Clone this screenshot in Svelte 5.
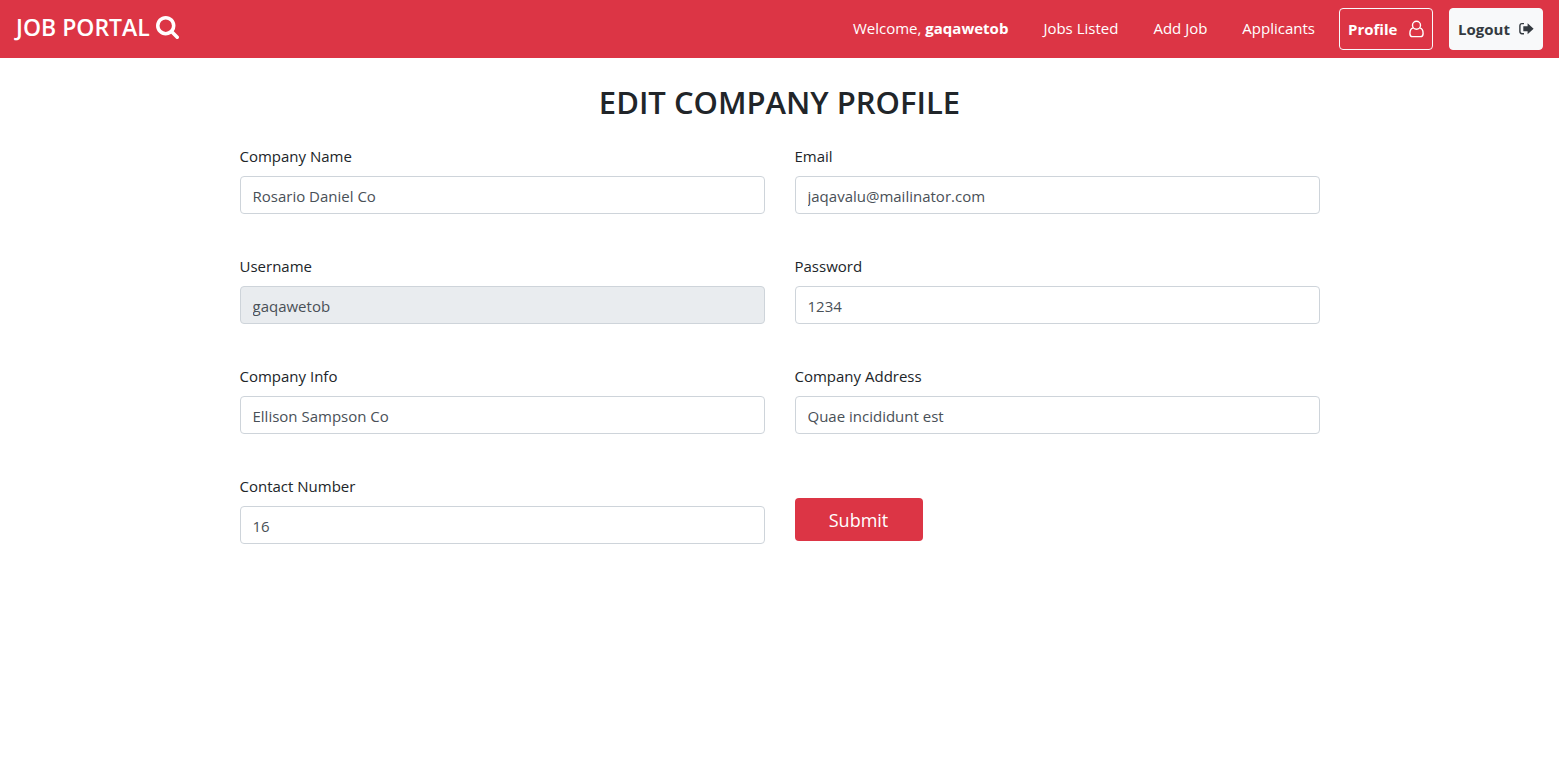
<script>
  const fields = [
    { id: 'company-name', label: 'Company Name', value: 'Rosario Daniel Co' },
    { id: 'email', label: 'Email', value: 'jaqavalu@mailinator.com' },
    { id: 'username', label: 'Username', value: 'gaqawetob', disabled: true },
    { id: 'password', label: 'Password', value: '1234' },
    { id: 'company-info', label: 'Company Info', value: 'Ellison Sampson Co' },
    { id: 'company-address', label: 'Company Address', value: 'Quae incididunt est' },
    { id: 'contact-number', label: 'Contact Number', value: '16' }
  ];
</script>

<header class="navbar">
  <a class="brand" href="#home">
    JOB PORTAL
    <svg class="search" viewBox="64 128 1664 1664" aria-hidden="true">
      <path d="M1216 832q0-185-131.5-316.5t-316.5-131.5-316.5 131.5-131.5 316.5 131.5 316.5 316.5 131.5 316.5-131.5 131.5-316.5zm512 832q0 52-38 90t-90 38q-54 0-90-38l-343-342q-179 124-399 124-143 0-273.5-55.5t-225-150-150-225-55.5-273.5 55.5-273.5 150-225 225-150 273.5-55.5 273.5 55.5 225 150 150 225 55.5 273.5q0 220-124 399l343 343q37 37 37 90z" />
    </svg>
  </a>
  <nav>
    <div class="links">
      <a href="#welcome">Welcome, <b>gaqawetob</b></a>
      <a href="#jobs">Jobs Listed</a>
      <a href="#add">Add Job</a>
      <a href="#applicants">Applicants</a>
    </div>
    <a class="btn profile" href="#profile">
      Profile
      <svg width="15" height="18" viewBox="0 0 15 18" aria-hidden="true">
        <g fill="none" stroke="currentColor" stroke-width="1.4">
          <circle cx="7.500" cy="5.200" r="4" />
          <path d="M4.200 7.900C2 8.500.9 10.500.9 13.400c0 2 1 3.200 2.700 3.200h7.800c1.700 0 2.700-1.200 2.700-3.200 0-2.900-1.100-4.900-3.300-5.500" />
        </g>
      </svg>
    </a>
    <a class="btn logout" href="#logout">
      Logout
      <svg width="15" height="14" viewBox="0 0 15 14" aria-hidden="true">
        <path d="M5 1.600H3Q.9 1.600.9 3.700v5.900q0 2.100 2.100 2.100H5" fill="none" stroke="currentColor" stroke-width="1.400" />
        <path d="M4.300 4.200H8.600V1.200L14.600 6.700 8.600 12.200V9.200H4.300Z" fill="currentColor" />
      </svg>
    </a>
  </nav>
</header>

<main>
  <h1>EDIT COMPANY PROFILE</h1>
  <form onsubmit={(e) => e.preventDefault()}>
    {#each fields as field}
      <div class="field">
        <label for={field.id}>{field.label}</label>
        <input id={field.id} type="text" value={field.value} disabled={field.disabled} />
      </div>
    {/each}
    <div class="action">
      <button type="submit">Submit</button>
    </div>
  </form>
</main>

<style>
  :global(body) {
    margin: 0;
    background: #fff;
    color: #212529;
    font: 15px/24px 'Segoe UI', 'Open Sans', 'Noto Sans', sans-serif;
  }

  .navbar {
    display: flex;
    justify-content: space-between;
    align-items: center;
    padding: 8px 16px;
    background: #dc3545;
  }

  a {
    color: #fff;
    text-decoration: none;
    white-space: nowrap;
  }

  .brand {
    display: flex;
    align-items: center;
    gap: 6px;
    padding-bottom: 4px;
    font-size: 23px;
    line-height: 28px;
    font-weight: 600;
  }

  .search {
    width: 23px;
    height: 23px;
    fill: #fff;
  }

  nav {
    display: flex;
    align-items: center;
    gap: 16px;
  }

  .links {
    display: flex;
    gap: 35px;
    padding: 0 8px 2px;
  }

  .btn {
    box-sizing: border-box;
    display: flex;
    align-items: center;
    justify-content: space-between;
    width: 94px;
    height: 42px;
    padding: 0 8px;
    border: 1px solid #f8f9fa;
    border-radius: 4px;
    font-weight: 700;
  }

  .logout {
    background: #f8f9fa;
    color: #343a40;
  }

  h1 {
    margin: 0 0 22px;
    font-size: 31px;
    line-height: 40px;
    font-weight: 600;
    text-align: center;
  }

  main {
    padding: 24px 15px;
  }

  form {
    display: grid;
    grid-template-columns: 1fr 1fr;
    gap: 40px 30px;
    max-width: 1080px;
    margin: 0 auto;
  }

  label {
    display: block;
    margin-bottom: 8px;
  }

  input {
    box-sizing: border-box;
    display: block;
    width: 100%;
    height: 38px;
    padding: 7px 12px 5px;
    border: 1px solid #ced4da;
    border-radius: 4px;
    background: #fff;
    color: #495057;
    font: inherit;
  }

  input:disabled {
    background: #e9ecef;
  }

  .action {
    align-self: end;
    padding-bottom: 3px;
  }

  button {
    display: block;
    width: 128px;
    height: 43px;
    padding: 0;
    border: 0;
    border-radius: 4px;
    background: #dc3545;
    color: #fff;
    font: inherit;
    font-size: 18px;
  }
</style>
